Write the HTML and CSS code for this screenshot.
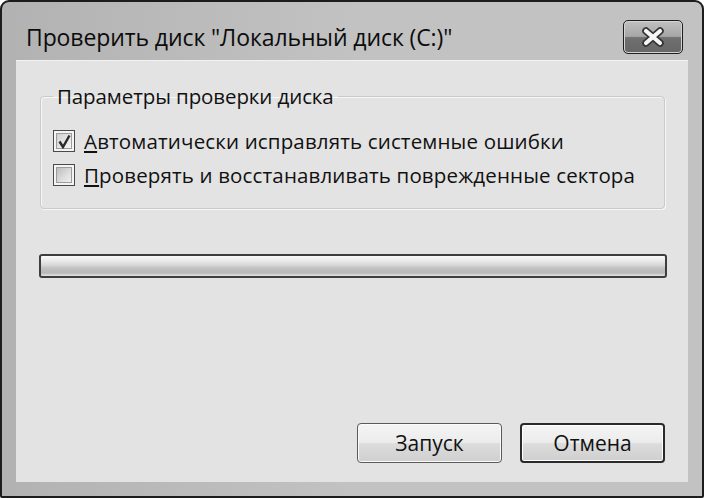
FILE: index.html
```html
<!DOCTYPE html>
<html lang="ru">
<head>
<meta charset="utf-8">
<link rel="stylesheet" href="styles.css">
</head>
<body>
<div class="window">
  <div class="titlebar">
    <span class="title">Проверить диск "Локальный диск (C:)"</span>
    <button class="close" aria-label="Закрыть">
      <svg width="26" height="20" viewBox="0 0 26 20">
        <path d="M6 4 L20 16 M20 4 L6 16" stroke="#333" stroke-width="7.5" stroke-linecap="round"/>
        <path d="M6 4 L20 16 M20 4 L6 16" stroke="#f6f6f6" stroke-width="4.2" stroke-linecap="round"/>
      </svg>
    </button>
  </div>
  <div class="content">
    <fieldset class="group">
      <legend>Параметры проверки диска</legend>
      <label class="row"><span class="cb checked"><svg width="15" height="15" viewBox="0 0 15 15"><path d="M2.5 7.5 L6 13 L12.5 1.5" fill="none" stroke="#2a2a2a" stroke-width="2.4"/></svg></span><span><u>А</u>втоматически исправлять системные ошибки</span></label>
      <label class="row"><span class="cb"></span><span><u>П</u>роверять и восстанавливать поврежденные сектора</span></label>
    </fieldset>
    <div class="progress"></div>
    <div class="buttons">
      <button class="btn">Запуск</button>
      <button class="btn default">Отмена</button>
    </div>
  </div>
</div>
</body>
</html>
```

FILE: styles.css
```css
html, body {
  margin: 0;
  padding: 0;
  background: #ffffff;
}
body {
  font-family: "Open Sans", "Noto Sans", sans-serif;
  color: #111;
}
.window {
  width: 704px;
  height: 498px;
  box-sizing: border-box;
  border: 2px solid #1c1c1c;
  border-radius: 9px 9px 2px 2px;
  background: linear-gradient(90deg, #b2b2b2 0%, #c2c2c2 50%, #c2c2c2 100%);
  padding: 0 14px 14px 14px;
  display: flex;
  flex-direction: column;
}
.titlebar {
  height: 58px;
  flex: none;
  display: flex;
  align-items: flex-start;
}
.title {
  margin-left: 10px;
  margin-top: 20px;
  font-size: 23px;
  line-height: 30px;
  color: #0c0c0c;
  letter-spacing: -0.1px;
}
.close {
  margin-left: auto;
  margin-right: 5px;
  margin-top: 18px;
  width: 60px;
  height: 34px;
  border: 1px solid #1e1e1e;
  border-radius: 5px;
  background: linear-gradient(180deg, #c0c0c0 0%, #a6a6a6 48%, #707070 52%, #666666 100%);
  box-shadow: inset 0 0 0 1px #d4d4d4;
  display: flex;
  align-items: center;
  justify-content: center;
  padding: 0;
}
.content {
  flex: 1;
  background: #e3e3e3;
  box-shadow: inset 0 1px 0 #f2f2f2;
  display: flex;
  flex-direction: column;
  padding: 0 23px 19px 24px;
}
.group {
  margin: 23px 0 0 0;
  padding: 15px 0 16px 12px;
  border: 1px solid #cacaca;
  border-radius: 4px;
  box-shadow: inset 1px 1px 0 #f7f7f7, 1px 1px 0 #f7f7f7;
}
.group legend {
  padding: 0 4px;
  font-size: 20.5px;
  line-height: 26px;
  letter-spacing: -0.1px;
}
.row {
  display: flex;
  align-items: center;
  gap: 9px;
  height: 34px;
  font-size: 20.5px;
  letter-spacing: 0.15px;
}
.cb {
  width: 22px;
  height: 22px;
  border: 1px solid #4a4a4a;
  background: #f4f4f4;
  box-sizing: border-box;
  position: relative;
  display: flex;
  align-items: center;
  justify-content: center;
  flex: none;
}
.cb::before {
  content: "";
  position: absolute;
  inset: 2px;
  border: 1px solid #9c9c9c;
  background: linear-gradient(135deg, #bdbdbd 0%, #dedede 60%, #f0f0f0 100%);
}
.cb.checked::before {
  background: linear-gradient(135deg, #cfcfcf 0%, #e8e8e8 60%, #f6f6f6 100%);
}
.cb svg {
  position: relative;
}
.progress {
  margin-top: 45px;
  height: 24px;
  width: 628px;
  margin-left: -1px;
  box-sizing: border-box;
  border: 2px solid #3e3e3e;
  border-radius: 3px;
  background: linear-gradient(180deg, #fafafa 0%, #e9e9e9 25%, #d8d8d8 45%, #c2c2c2 60%, #b8b8b8 85%, #e6e6e6 100%);
}
.buttons {
  margin-top: auto;
  display: flex;
  justify-content: flex-end;
  gap: 18px;
}
.btn {
  width: 145px;
  height: 40px;
  border: 1px solid #5a5a5a;
  border-radius: 4px;
  background: linear-gradient(180deg, #f4f4f4 0%, #ececec 48%, #dcdcdc 52%, #cfcfcf 100%);
  box-shadow: inset 0 0 0 1px #fbfbfb;
  font-family: "Open Sans", "Noto Sans", sans-serif;
  font-size: 21px;
  color: #111;
  padding: 0;
}
.btn.default {
  border: 2px solid #2a2a2a;
  box-shadow: inset 0 0 0 1px #ffffff;
}
```
